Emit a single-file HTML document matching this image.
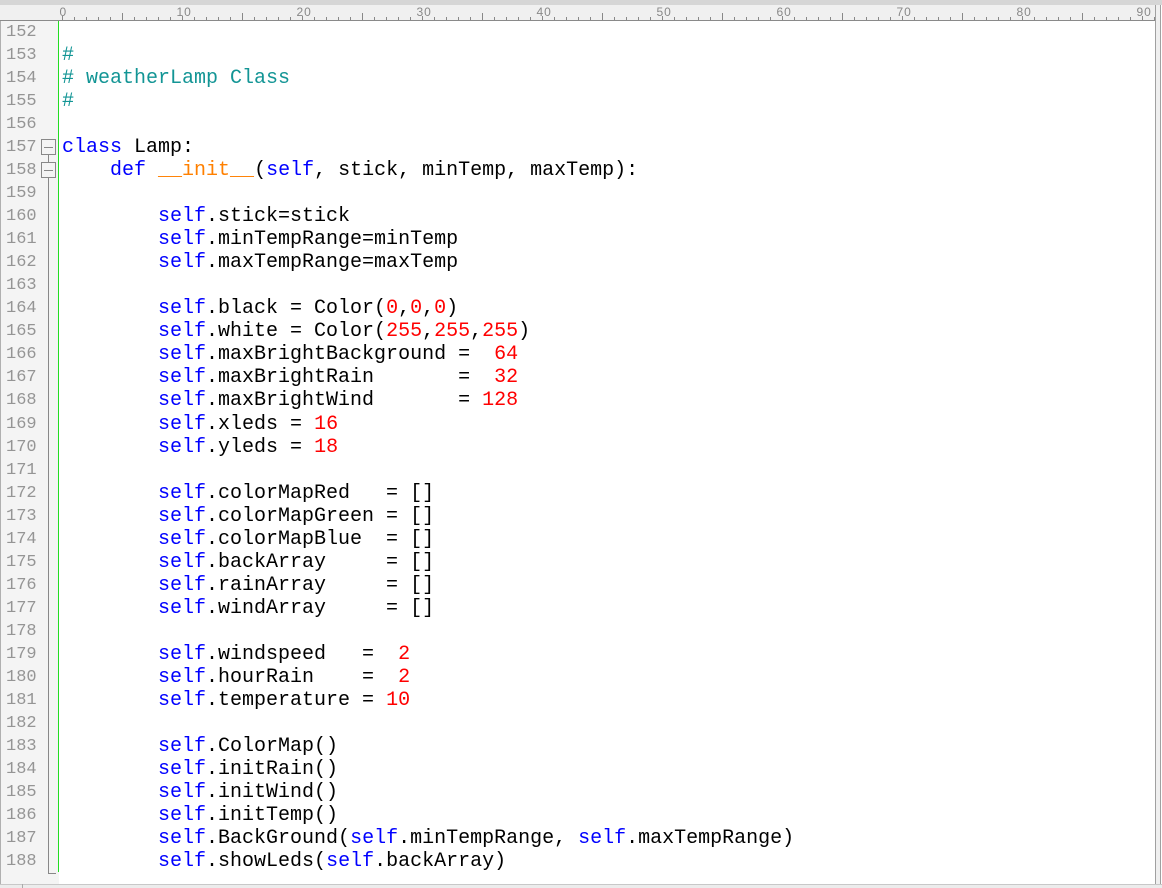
<!DOCTYPE html>
<html><head><meta charset="utf-8">
<style>
html,body{margin:0;padding:0;background:#fff;width:1162px;height:888px;overflow:hidden;position:relative;font-family:"Liberation Mono",monospace}
#top{position:absolute;left:0;top:0;width:1162px;height:5px;background:#d6d6d6}
#ruler{position:absolute;left:0;top:5px;width:1155px;height:15px;background:#f0f0f0;border-bottom:1px solid #8a8a8a}
#gutter{position:absolute;left:0;top:21px;width:58px;height:863px;background:#f4f4f4;border-left:1px solid #b0b0b0}
#green{position:absolute;left:58px;top:21px;width:1px;height:851px;background:#22dd22}
.ln{position:absolute;left:6px;font-size:17px;color:#959595;line-height:23px}
.code{position:absolute;left:62px;font-size:20px;line-height:23px;white-space:pre;color:#000}
.k{color:#0000ff}.s{color:#0000ff}.n{color:#ff0000}.c{color:#139595}.o{color:#ff8000}
#rs1{position:absolute;left:1155px;top:5px;width:1px;height:880px;background:#a0a0a0}
#rs2{position:absolute;left:1156px;top:5px;width:4px;height:880px;background:#efefef}
#rs3{position:absolute;left:1160px;top:5px;width:1px;height:880px;background:#a0a0a0}
#bot{position:absolute;left:0;top:884px;width:1162px;height:4px;background:#ececec;border-top:1px solid #c8c8c8}
#bot2{position:absolute;left:22px;top:884px;width:1px;height:4px;background:#aaa}
.fold{position:absolute;left:41px;width:15px;height:16px;border:1px solid #888;background:#f4f4f4;box-sizing:border-box}
.fold:after{content:"";position:absolute;left:2px;right:2px;top:7px;height:1px;background:#888}
</style></head><body>
<div id="top"></div>
<div id="ruler"><svg width="1155" height="15" id="rsvg"></svg></div>
<div id="gutter"></div>
<div id="green"></div>
<div id="lines"></div>
<div class="fold" style="top:139px"></div>
<div style="position:absolute;left:48px;top:155px;width:1px;height:7px;background:#888"></div>
<div class="fold" style="top:162px"></div>
<div style="position:absolute;left:48px;top:178px;width:1px;height:696px;background:#888"></div>
<div style="position:absolute;left:48px;top:873px;width:8px;height:1px;background:#888"></div>
<div id="rs1"></div><div id="rs2"></div><div id="rs3"></div>
<div id="bot"></div><div id="bot2"></div>
<script>
var s='';
for(var c=0;c<=91;c++){var x=62.5+12*c;var h=(c%5==0)?7:3;if(c%10==0)h=4;s+='<line x1="'+x+'" y1="'+(15-h)+'" x2="'+x+'" y2="15" stroke="#888" stroke-width="1"/>';
if(c%10==0){s+='<text x="'+(x-(c?6:3))+'" y="11" font-family="Liberation Sans" font-size="12" fill="#888" letter-spacing="1">'+c+'</text>';}}
document.getElementById('rsvg').innerHTML=s;
var S='<span class="s">self</span>';
function n(v){return '<span class="n">'+v+'</span>';}
var L=[
'','<span class="c">#</span>','<span class="c"># weatherLamp Class</span>','<span class="c">#</span>','',
'<span class="k">class</span> Lamp:',
'    <span class="k">def</span> <span class="o">__init__</span>('+S+', stick, minTemp, maxTemp):',
'',
'        '+S+'.stick=stick',
'        '+S+'.minTempRange=minTemp',
'        '+S+'.maxTempRange=maxTemp',
'',
'        '+S+'.black = Color('+n(0)+','+n(0)+','+n(0)+')',
'        '+S+'.white = Color('+n(255)+','+n(255)+','+n(255)+')',
'        '+S+'.maxBrightBackground =  '+n(64),
'        '+S+'.maxBrightRain       =  '+n(32),
'        '+S+'.maxBrightWind       = '+n(128),
'        '+S+'.xleds = '+n(16),
'        '+S+'.yleds = '+n(18),
'',
'        '+S+'.colorMapRed   = []',
'        '+S+'.colorMapGreen = []',
'        '+S+'.colorMapBlue  = []',
'        '+S+'.backArray     = []',
'        '+S+'.rainArray     = []',
'        '+S+'.windArray     = []',
'',
'        '+S+'.windspeed   =  '+n(2),
'        '+S+'.hourRain    =  '+n(2),
'        '+S+'.temperature = '+n(10),
'',
'        '+S+'.ColorMap()',
'        '+S+'.initRain()',
'        '+S+'.initWind()',
'        '+S+'.initTemp()',
'        '+S+'.BackGround('+S+'.minTempRange, '+S+'.maxTempRange)',
'        '+S+'.showLeds('+S+'.backArray)'];
var h='';
for(var i=0;i<L.length;i++){var t=21+i*23.03;
h+='<div class="ln" style="top:'+t+'px">'+(152+i)+'</div><div class="code" style="top:'+t+'px">'+L[i]+'</div>';}
document.getElementById('lines').innerHTML=h;
</script>
</body></html>
